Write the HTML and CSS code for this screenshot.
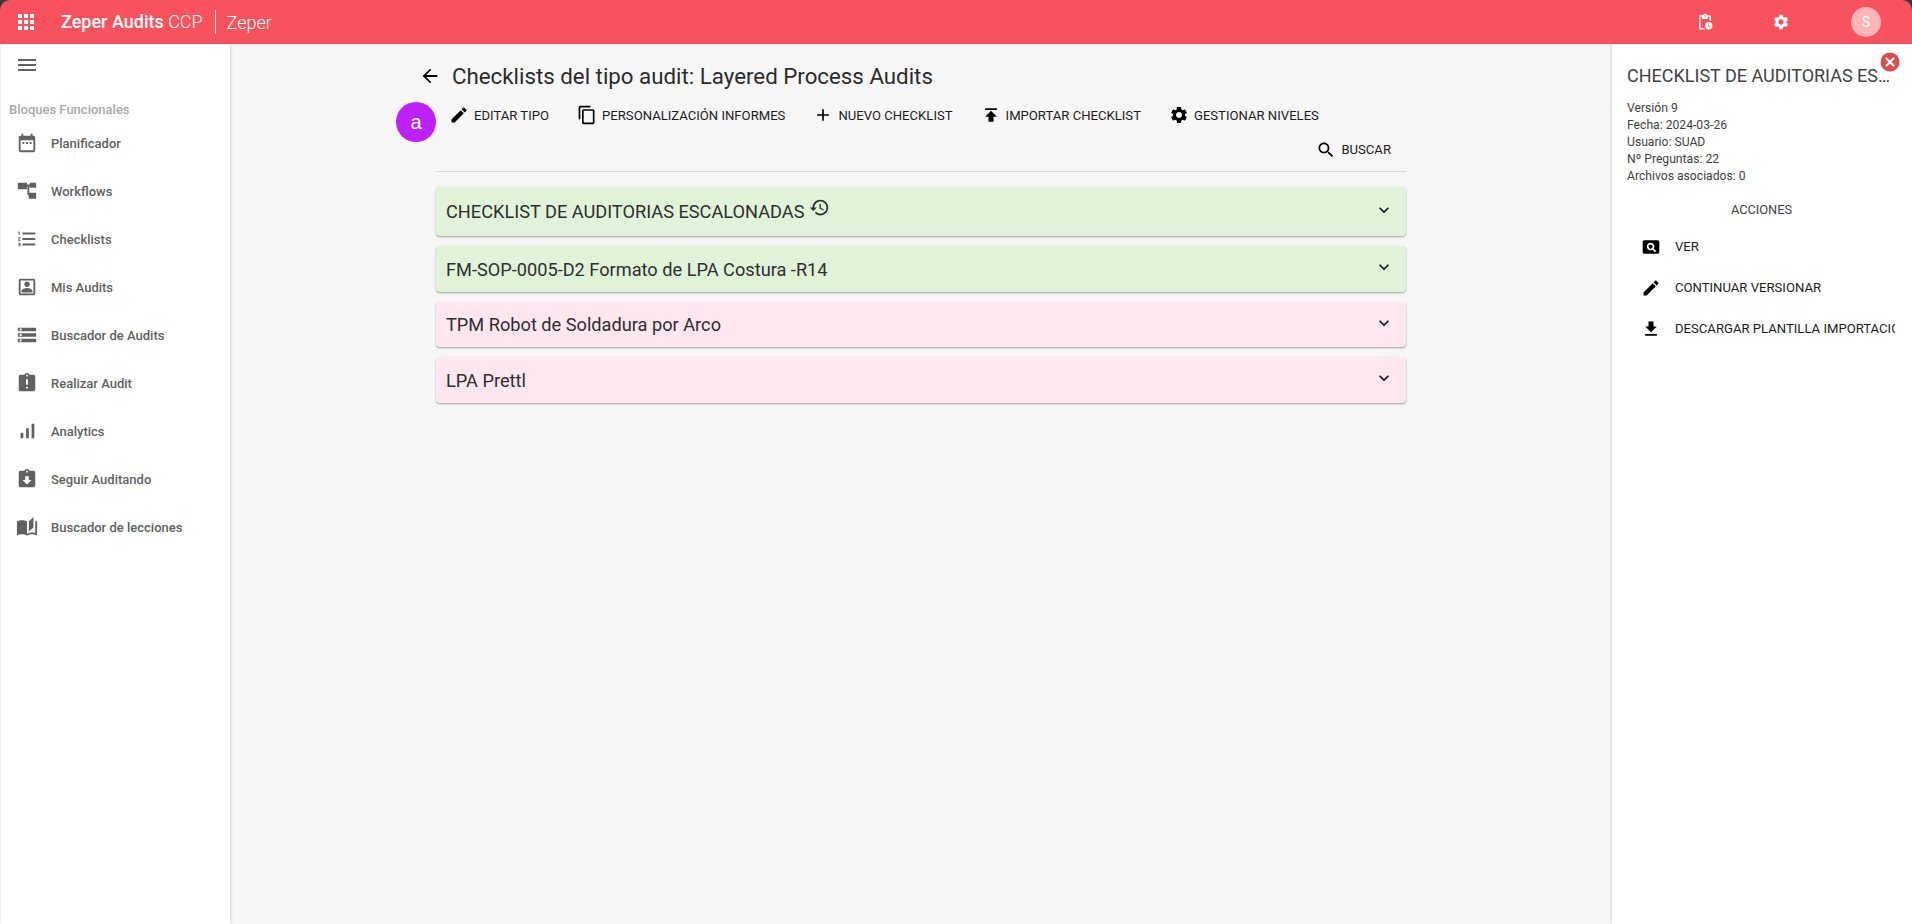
FILE: index.html
```html
<!DOCTYPE html>
<html lang="es">
<head>
<meta charset="utf-8">
<title>Zeper Audits CCP</title>
<link rel="stylesheet" href="styles.css">
</head>
<body>
<div class="app">
  <header class="topbar">
    <svg class="ic ic-apps" viewBox="0 0 24 24"><path d="M4 8h4V4H4v4zm6 12h4v-4h-4v4zm-6 0h4v-4H4v4zm0-6h4v-4H4v4zm6 0h4v-4h-4v4zm6-10v4h4V4h-4zm-6 4h4V4h-4v4zm6 6h4v-4h-4v4zm0 6h4v-4h-4v4z"/></svg>
    <div class="brand"><b>Zeper Audits</b> CCP</div>
    <div class="org">Zeper</div>
    <div class="top-actions">
      <svg class="ic ic-top" viewBox="0 0 24 24"><path d="M17 12c-2.76 0-5 2.24-5 5s2.24 5 5 5 5-2.24 5-5-2.24-5-5-5zm1.65 7.35L16.5 17.2V14h1v2.79l1.85 1.85-.7.71zM18 3h-3.18C14.4 1.84 13.3 1 12 1s-2.4.84-2.82 2H6c-1.1 0-2 .9-2 2v15c0 1.1.9 2 2 2h6.11c-.59-.57-1.07-1.25-1.42-2H6V5h2v3h8V5h2v5.08c.71.1 1.38.31 2 .6V5c0-1.1-.9-2-2-2zm-6 2c-.55 0-1-.45-1-1s.45-1 1-1 1 .45 1 1-.45 1-1 1z"/></svg>
      <svg class="ic ic-top" viewBox="0 0 24 24"><path d="M19.14 12.94c.04-.3.06-.61.06-.94 0-.32-.02-.64-.07-.94l2.03-1.58c.18-.14.23-.41.12-.61l-1.92-3.32c-.12-.22-.37-.29-.59-.22l-2.39.96c-.5-.38-1.03-.7-1.62-.94l-.36-2.54c-.04-.24-.24-.41-.48-.41h-3.84c-.24 0-.43.17-.47.41l-.36 2.54c-.59.24-1.13.57-1.62.94l-2.39-.96c-.22-.08-.47 0-.59.22L2.74 8.87c-.12.21-.08.47.12.61l2.03 1.58c-.05.3-.09.63-.09.94s.02.64.07.94l-2.03 1.58c-.18.14-.23.41-.12.61l1.92 3.32c.12.22.37.29.59.22l2.39-.96c.5.38 1.03.7 1.62.94l.36 2.54c.05.24.24.41.48.41h3.84c.24 0 .44-.17.47-.41l.36-2.54c.59-.24 1.13-.56 1.62-.94l2.39.96c.22.08.47 0 .59-.22l1.92-3.32c.12-.22.07-.47-.12-.61l-2.01-1.58zM12 15.6c-1.98 0-3.6-1.62-3.6-3.6s1.62-3.6 3.6-3.6 3.6 1.62 3.6 3.6-1.62 3.6-3.6 3.6z"/></svg>
      <div class="avatar">S</div>
    </div>
  </header>
  <div class="body-row">
    <nav class="sidebar">
      <div class="menu-btn"><svg class="ic ic-menu" viewBox="0 0 24 24"><path d="M3 18h18v-2H3v2zm0-5h18v-2H3v2zm0-7v2h18V6H3z"/></svg></div>
      <div class="nav-title">Bloques Funcionales</div>
      <a class="nav-item"><svg class="ic" viewBox="0 0 24 24"><path d="M9 11H7v2h2v-2zm4 0h-2v2h2v-2zm4 0h-2v2h2v-2zm2-7h-1V2h-2v2H8V2H6v2H5c-1.11 0-1.99.9-1.99 2L3 20c0 1.1.89 2 2 2h14c1.1 0 2-.9 2-2V6c0-1.1-.9-2-2-2zm0 16H5V9h14v11z"/></svg><span>Planificador</span></a>
      <a class="nav-item"><svg class="ic" viewBox="0 0 24 24"><path d="M2 3h10v7H2zM15 3h7v5.5h-7zM12 5h3v2h-3zM12.5 7h2v9.5h-2zM14 14h8v6.5h-8z"/></svg><span>Workflows</span></a>
      <a class="nav-item"><svg class="ic" viewBox="0 0 24 24"><path d="M2 17h2v.5H3v1h1v.5H2v1h3v-4H2v1zm1-9h1V4H2v1h1v3zm-1 3h1.8L2 13.1v.9h3v-1H3.2L5 10.9V10H2v1zm5-6v2h14V5H7zm0 14h14v-2H7v2zm0-6h14v-2H7v2z"/></svg><span>Checklists</span></a>
      <a class="nav-item"><svg class="ic" viewBox="0 0 24 24"><path d="M12 12c1.65 0 3-1.35 3-3s-1.35-3-3-3-3 1.35-3 3 1.35 3 3 3zm6 4.58c0-2.5-3.97-3.58-6-3.58s-6 1.08-6 3.58V18h12v-1.42zM19 3H5c-1.1 0-2 .9-2 2v14c0 1.1.9 2 2 2h14c1.1 0 2-.9 2-2V5c0-1.1-.9-2-2-2zm0 16H5V5h14v14z"/></svg><span>Mis Audits</span></a>
      <a class="nav-item"><svg class="ic" viewBox="0 0 24 24"><path d="M2 20h20v-4H2v4zm2-3h2v2H4v-2zM2 4v4h20V4H2zm4 3H4V5h2v2zm-4 7h20v-4H2v4zm2-3h2v2H4v-2z"/></svg><span>Buscador de Audits</span></a>
      <a class="nav-item"><svg class="ic" viewBox="0 0 24 24"><path d="M19 3h-4.18C14.4 1.84 13.3 1 12 1c-1.3 0-2.4.84-2.82 2H5c-1.1 0-2 .9-2 2v14c0 1.1.9 2 2 2h14c1.1 0 2-.9 2-2V5c0-1.1-.9-2-2-2zm-6 15h-2v-2h2v2zm0-4h-2V8h2v6zm-1-9c-.55 0-1-.45-1-1s.45-1 1-1 1 .45 1 1-.45 1-1 1z"/></svg><span>Realizar Audit</span></a>
      <a class="nav-item"><svg class="ic" viewBox="0 0 24 24"><path d="M17 4h3v16h-3V4zM5 14h3v6H5v-6zm6-5h3v11h-3V9z"/></svg><span>Analytics</span></a>
      <a class="nav-item"><svg class="ic" viewBox="0 0 24 24"><path d="M19 3h-4.18C14.4 1.84 13.3 1 12 1c-1.3 0-2.4.84-2.82 2H5c-1.1 0-2 .9-2 2v14c0 1.1.9 2 2 2h14c1.1 0 2-.9 2-2V5c0-1.1-.9-2-2-2zm-7 0c.55 0 1 .45 1 1s-.45 1-1 1-1-.45-1-1 .45-1 1-1zm0 15l-5-5h3V9h4v4h3l-5 5z"/></svg><span>Seguir Auditando</span></a>
      <a class="nav-item"><svg class="ic" viewBox="0 0 24 24"><path d="M19 1l-5 5v11l5-4.5V1zM1 6v14.65c0 .25.25.5.5.5.1 0 .15-.05.25-.05C3.1 20.45 5.05 20 6.5 20c1.95 0 4.05.4 5.5 1.5V6c-1.45-1.1-3.55-1.5-5.5-1.5S2.45 4.9 1 6zm22 13.5V6c-.6-.45-1.25-.75-2-1v13.5c-1.1-.35-2.3-.5-3.5-.5-1.7 0-4.15.65-5.5 1.5v2c1.35-.85 3.8-1.5 5.5-1.5 1.65 0 3.35.3 4.75 1.05.1.05.15.05.25.05.25 0 .5-.25.5-.5v-1.1z"/></svg><span>Buscador de lecciones</span></a>
    </nav>
    <main class="main">
      <div class="content">
        <div class="fab">a</div>
        <div class="title-row">
          <svg class="ic ic-back" viewBox="0 0 24 24"><path d="M20 11H7.83l5.59-5.59L12 4l-8 8 8 8 1.41-1.41L7.83 13H20v-2z"/></svg>
          <h1>Checklists del tipo audit: Layered Process Audits</h1>
        </div>
        <div class="tools">
          <button class="tool"><svg class="ic" viewBox="0 0 24 24"><path d="M3 17.25V21h3.75L17.81 9.94l-3.75-3.75L3 17.25zM20.71 7.04c.39-.39.39-1.02 0-1.41l-2.34-2.34c-.39-.39-1.02-.39-1.41 0l-1.83 1.83 3.75 3.75 1.83-1.83z"/></svg>EDITAR TIPO</button>
          <button class="tool"><svg class="ic" viewBox="0 0 24 24"><path d="M16 1H4c-1.1 0-2 .9-2 2v14h2V3h12V1zm3 4H8c-1.1 0-2 .9-2 2v14c0 1.1.9 2 2 2h11c1.1 0 2-.9 2-2V7c0-1.1-.9-2-2-2zm0 16H8V7h11v14z"/></svg>PERSONALIZACIÓN INFORMES</button>
          <button class="tool"><svg class="ic" viewBox="0 0 24 24"><path d="M19 13h-6v6h-2v-6H5v-2h6V5h2v6h6v2z"/></svg>NUEVO CHECKLIST</button>
          <button class="tool"><svg class="ic" viewBox="0 0 24 24"><path d="M5 4v2h14V4H5zm0 10h4v6h6v-6h4l-7-7-7 7z"/></svg>IMPORTAR CHECKLIST</button>
          <button class="tool"><svg class="ic" viewBox="0 0 24 24"><path d="M19.14 12.94c.04-.3.06-.61.06-.94 0-.32-.02-.64-.07-.94l2.03-1.58c.18-.14.23-.41.12-.61l-1.92-3.32c-.12-.22-.37-.29-.59-.22l-2.39.96c-.5-.38-1.03-.7-1.62-.94l-.36-2.54c-.04-.24-.24-.41-.48-.41h-3.84c-.24 0-.43.17-.47.41l-.36 2.54c-.59.24-1.13.57-1.62.94l-2.39-.96c-.22-.08-.47 0-.59.22L2.74 8.87c-.12.21-.08.47.12.61l2.03 1.58c-.05.3-.09.63-.09.94s.02.64.07.94l-2.03 1.58c-.18.14-.23.41-.12.61l1.92 3.32c.12.22.37.29.59.22l2.39-.96c.5.38 1.03.7 1.62.94l.36 2.54c.05.24.24.41.48.41h3.84c.24 0 .44-.17.47-.41l.36-2.54c.59-.24 1.13-.56 1.62-.94l2.39.96c.22.08.47 0 .59-.22l1.92-3.32c.12-.22.07-.47-.12-.61l-2.01-1.58zM12 15.6c-1.98 0-3.6-1.62-3.6-3.6s1.62-3.6 3.6-3.6 3.6 1.62 3.6 3.6-1.62 3.6-3.6 3.6z"/></svg>GESTIONAR NIVELES</button>
        </div>
        <div class="search-row">
          <button class="tool"><svg class="ic" viewBox="0 0 24 24"><path d="M15.5 14h-.79l-.28-.27C15.41 12.59 16 11.11 16 9.5 16 5.91 13.09 3 9.5 3S3 5.91 3 9.5 5.91 16 9.5 16c1.61 0 3.09-.59 4.23-1.57l.27.28v.79l5 4.99L20.49 19l-4.99-5zm-6 0C7.01 14 5 11.99 5 9.5S7.01 5 9.5 5 14 7.01 14 9.5 11.99 14 9.5 14z"/></svg>BUSCAR</button>
        </div>
        <div class="cards">
          <div class="card green c1"><span>CHECKLIST DE AUDITORIAS ESCALONADAS</span><svg class="ic ic-hist" viewBox="0 0 24 24"><path d="M13 3c-4.97 0-9 4.03-9 9H1l3.89 3.89.07.14L9 12H6c0-3.87 3.13-7 7-7s7 3.13 7 7-3.13 7-7 7c-1.93 0-3.68-.79-4.94-2.06l-1.42 1.42C8.27 19.99 10.51 21 13 21c4.97 0 9-4.03 9-9s-4.03-9-9-9zm-1 5v5l4.28 2.54.72-1.21-3.5-2.08V8H12z"/></svg><svg class="ic ic-exp" viewBox="0 0 24 24"><path d="M16.59 8.59L12 13.17 7.41 8.59 6 10l6 6 6-6z"/></svg></div>
          <div class="card green"><span>FM-SOP-0005-D2 Formato de LPA Costura -R14</span><svg class="ic ic-exp" viewBox="0 0 24 24"><path d="M16.59 8.59L12 13.17 7.41 8.59 6 10l6 6 6-6z"/></svg></div>
          <div class="card pink c3"><span>TPM Robot de Soldadura por Arco</span><svg class="ic ic-exp" viewBox="0 0 24 24"><path d="M16.59 8.59L12 13.17 7.41 8.59 6 10l6 6 6-6z"/></svg></div>
          <div class="card pink"><span>LPA Prettl</span><svg class="ic ic-exp" viewBox="0 0 24 24"><path d="M16.59 8.59L12 13.17 7.41 8.59 6 10l6 6 6-6z"/></svg></div>
        </div>
      </div>
    </main>
    <aside class="panel">
      <svg class="close" viewBox="0 0 20 20"><circle cx="10" cy="10" r="9.5"/><path d="M6.5 6.5l7 7M13.5 6.5l-7 7"/></svg>
      <h2>CHECKLIST DE AUDITORIAS ESCALONADAS</h2>
      <div class="info">
        <div>Versión 9</div>
        <div>Fecha: 2024-03-26</div>
        <div>Usuario: SUAD</div>
        <div>Nº Preguntas: 22</div>
        <div>Archivos asociados: 0</div>
      </div>
      <div class="panel-head">ACCIONES</div>
      <div class="panel-actions">
        <div class="action"><svg class="ic" viewBox="0 0 24 24"><path d="M11.5 9C10.12 9 9 10.12 9 11.5s1.12 2.5 2.5 2.5 2.5-1.12 2.5-2.5S12.88 9 11.5 9zM20 4H4c-1.1 0-2 .9-2 2v12c0 1.1.9 2 2 2h16c1.1 0 2-.9 2-2V6c0-1.1-.9-2-2-2zm-3.21 14.21l-2.91-2.91c-.69.44-1.51.7-2.38.7C9 16 7 14 7 11.5S9 7 11.5 7 16 9 16 11.5c0 .88-.26 1.69-.7 2.39l2.91 2.9-1.42 1.42z"/></svg><span>VER</span></div>
        <div class="action"><svg class="ic" viewBox="0 0 24 24"><path d="M3 17.25V21h3.75L17.81 9.94l-3.75-3.75L3 17.25zM20.71 7.04c.39-.39.39-1.02 0-1.41l-2.34-2.34c-.39-.39-1.02-.39-1.41 0l-1.83 1.83 3.75 3.75 1.83-1.83z"/></svg><span>CONTINUAR VERSIONAR</span></div>
        <div class="action"><svg class="ic" viewBox="0 0 24 24"><path d="M19 9h-4V3H9v6H5l7 7 7-7zM5 18v2h14v-2H5z"/></svg><span>DESCARGAR PLANTILLA IMPORTACIÓN</span></div>
      </div>
    </aside>
  </div>
</div>
</body>
</html>
```
FILE: styles.css
```css
* { box-sizing: border-box; }
html, body { margin: 0; height: 100%; }
body { background: #3a3a3a; font-family: Roboto, "Liberation Sans", sans-serif; overflow: hidden; }
.app { height: 924px; display: flex; flex-direction: column; }
.ic { display: block; fill: currentColor; flex: none; }

.topbar { height: 44px; flex: none; background: #f7525e; color: #fff; display: flex; align-items: center; border-radius: 10px 10px 0 0; padding-left: 14px; }
.ic-apps { width: 24px; height: 24px; }
.brand { margin-left: 23px; font-size: 18px; font-weight: 300; line-height: 24px; padding-right: 12px; border-right: 1px solid #fff; white-space: nowrap; }
.brand b { font-weight: 500; }
.org { margin-left: 11px; font-size: 18px; font-weight: 300; }
.top-actions { margin-left: auto; display: flex; align-items: center; padding-right: 31px; }
.ic-top { width: 18px; height: 18px; margin-right: 58px; }
.ic-top:nth-child(2) { margin-right: 61px; }
.avatar { width: 30px; height: 30px; border-radius: 50%; background: #fdb5b8; font-size: 14px; display: flex; align-items: center; justify-content: center; }

.body-row { flex: 1; display: flex; min-height: 0; background: #f6f6f6; }
.sidebar { width: 229px; flex: none; margin-left: 1px; background: #fff; box-shadow: 1px 0 3px rgba(0,0,0,.13); padding-top: 9px; position: relative; color: #616161; }
.menu-btn { padding-left: 14px; height: 24px; }
.ic-menu { width: 24px; height: 24px; }
.nav-title { margin: 23px 0 0 8px; height: 19px; font-size: 13px; line-height: 19px; color: #aaa; font-weight: 500; }
.nav-item { height: 48px; display: flex; align-items: center; padding-left: 15px; font-size: 13px; font-weight: 500; }
.nav-item .ic { width: 22px; height: 22px; }
.nav-item span { margin-left: 13px; }

.main { flex: 1; min-width: 0; padding-left: 206px; }
.content { width: 970px; position: relative; padding-top: 15px; }
.fab { position: absolute; left: -40px; top: 58px; width: 40px; height: 40px; border-radius: 50%; background: #bd20fb; color: #fff; display: flex; align-items: center; justify-content: center; font-size: 20px; font-family: "Liberation Sans", sans-serif; }
.title-row { display: flex; align-items: center; height: 34px; margin-left: -17px; }
.ic-back { width: 22px; height: 22px; color: #000; }
.title-row h1 { margin: 0 0 0 11px; font-size: 22.3px; font-weight: 400; color: #2b2b2b; white-space: nowrap; }
.tools { display: flex; margin-left: 13px; height: 36px; margin-top: 4px; }
.tool { appearance: none; border: 0; background: none; padding: 0; font: 400 13.12px Roboto, sans-serif; color: #1c1c1c; display: flex; align-items: center; gap: 5px; white-space: nowrap; }
.tool .ic { width: 20px; height: 20px; color: #000; }
.tools .tool { margin-right: 28px; }
.search-row { display: flex; justify-content: flex-end; height: 39px; padding: 0 15px 5px 0; border-bottom: 1px solid #d9d9d9; }
.cards { margin-top: 15px; display: flex; flex-direction: column; gap: 10px; }
.card { height: 46px; border-radius: 4px; display: flex; align-items: center; padding: 0 12px 0 10px; font-size: 18.2px; color: #2e2e2e; box-shadow: 0 1px 2px rgba(0,0,0,.35); }
.card.c1 { height: 49px; }
.card.c3 { height: 45px; }
.card.green { background: #e0f3d8; }
.card.pink { background: #ffe6ef; }
.ic-exp { width: 20px; height: 20px; margin-left: auto; color: #111; position: relative; top: -2px; }
.ic-hist { width: 21px; height: 21px; margin-left: 5px; position: relative; top: -4px; }

.panel { width: 300px; flex: none; background: #fff; box-shadow: -1px 0 3px rgba(0,0,0,.13); padding: 22px 19px 0 15px; position: relative; color: #424242; }
.close { position: absolute; left: 268px; top: 8px; width: 20px; height: 20px; }
.close circle { fill: #dc4a4a; }
.close path { stroke: #fff; stroke-width: 2.2; stroke-linecap: round; fill: none; }
.panel h2 { margin: 0; font-size: 18px; line-height: 20px; font-weight: 400; white-space: nowrap; overflow: hidden; text-overflow: ellipsis; }
.info { margin-top: 14px; font-size: 12.16px; line-height: 17px; }
.panel-head { margin-top: 16px; text-align: center; font-size: 12.8px; line-height: 17px; padding-left: 3px; }
.panel-actions { margin-top: 8px; width: 268px; overflow: hidden; }
.action { height: 41px; display: flex; align-items: center; padding-left: 14px; font-size: 13.12px; color: #1c1c1c; white-space: nowrap; }
.action .ic { width: 20px; height: 20px; color: #000; }
.action span { margin-left: 14px; }
```
